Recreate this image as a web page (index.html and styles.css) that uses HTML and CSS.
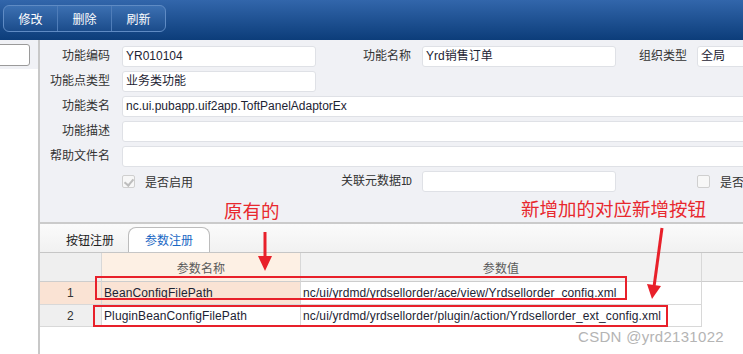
FILE: index.html
```html
<!DOCTYPE html>
<html lang="zh-CN">
<head>
    <meta charset="UTF-8">
    <meta name="viewport" content="width=device-width, initial-scale=1.0">
    <title>功能节点 - 参数注册</title>
    <link rel="stylesheet" href="styles.css">
</head>
<body>
    <div class="toolbar">
        <div class="btn-group">
            <button class="tool-btn">修改</button>
            <button class="tool-btn">删除</button>
            <button class="tool-btn">刷新</button>
        </div>
    </div>

    <div class="workspace">
        <aside class="side">
            <div class="side-top"><div class="side-search"></div></div>
        </aside>

        <main class="main">
            <!-- Card form -->
            <div class="card">
                <div class="lbl c1">功能编码</div>
                <div class="field">YR010104</div>
                <div class="lbl c3">功能名称</div>
                <div class="field">Yrd销售订单</div>
                <div class="lbl c5">组织类型</div>
                <div class="field edge">全局</div>

                <div class="lbl c1">功能点类型</div>
                <div class="field">业务类功能</div>

                <div class="lbl c1">功能类名</div>
                <div class="field wide edge">nc.ui.pubapp.uif2app.ToftPanelAdaptorEx</div>

                <div class="lbl c1">功能描述</div>
                <div class="field wide edge"></div>

                <div class="lbl c1">帮助文件名</div>
                <div class="field wide edge"></div>

                <div class="check c2"><span class="box checked"></span>是否启用</div>
                <div class="lbl c3">关联元数据<span class="mono">ID</span></div>
                <div class="field"></div>
                <div class="check c6"><span class="box"></span>是否启用</div>
            </div>

            <!-- Tabs -->
            <div class="tabs">
                <div class="tab">按钮注册</div>
                <div class="tab active">参数注册</div>
            </div>

            <!-- Parameter grid -->
            <div class="sheet">
                <div class="cell hd num"></div>
                <div class="cell hd name">参数名称</div>
                <div class="cell hd val">参数值</div>
                <div class="cell hd rest"></div>

                <div class="cell num sel">1</div>
                <div class="cell name sel">BeanConfigFilePath</div>
                <div class="cell val">nc/ui/yrdmd/yrdsellorder/ace/view/Yrdsellorder_config.xml</div>
                <div class="cell rest"></div>

                <div class="cell num">2</div>
                <div class="cell name">PluginBeanConfigFilePath</div>
                <div class="cell val">nc/ui/yrdmd/yrdsellorder/plugin/action/Yrdsellorder_ext_config.xml</div>
                <div class="cell rest"></div>
            </div>
        </main>
    </div>

    <!-- Annotations drawn over the screenshot -->
    <div class="notes">
        <div class="note note-old">原有的</div>
        <div class="note note-new">新增加的对应新增按钮</div>
        <div class="mark mark-1"></div>
        <div class="mark mark-2"></div>
        <svg class="arrows" width="743" height="354" viewBox="0 0 743 354">
            <line x1="265" y1="232" x2="265" y2="258" stroke="#e8202a" stroke-width="3"/>
            <polygon points="258,256 272,256 265,271" fill="#e8202a"/>
            <line x1="662" y1="228" x2="654" y2="287" stroke="#e8202a" stroke-width="3"/>
            <polygon points="647,284 661,286 652,299" fill="#e8202a"/>
        </svg>
        <div class="watermark">CSDN @yrd2131022</div>
    </div>
</body>
</html>
```

FILE: styles.css
```css
/* Global */
body {
    margin: 0;
    width: 743px;
    height: 354px;
    overflow: hidden;
    position: relative;
    font-family: "Liberation Sans", "Noto Sans CJK SC", sans-serif;
    font-size: 12px;
    color: #2b2b2b;
    background: #fff;
}

/* Toolbar */
.toolbar {
    height: 40px;
    box-sizing: border-box;
    padding: 5px 3px;
    background: linear-gradient(#3266ab, #0c3d7a);
}

.btn-group {
    display: inline-flex;
    height: 27px;
    border: 1px solid #5f8bc4;
    border-radius: 6px;
    background: linear-gradient(#3c70b2, #1b4c8b);
    box-sizing: border-box;
    overflow: hidden;
}

.tool-btn {
    width: 53px;
    padding: 0;
    border: none;
    background: transparent;
    color: #fff;
    font-family: "Noto Sans CJK SC", sans-serif;
    font-size: 12px;
    cursor: pointer;
}

.tool-btn + .tool-btn {
    border-left: 1px solid #4f7db9;
    width: 54px;
}

/* Workspace */
.workspace {
    display: flex;
    height: 314px;
}

.side {
    width: 38px;
    flex: none;
    border-right: 2px solid #c8c8c8;
    background: #fff;
}

.side-top {
    height: 29px;
    padding-top: 4px;
    box-sizing: border-box;
    background: #f0f1f5;
}

.side-search {
    width: 34px;
    height: 22px;
    margin-left: -4px;
    box-sizing: border-box;
    border: 1px solid #9a9a9a;
    border-radius: 3px;
    background: #fff;
}

.main {
    flex: 1;
    overflow: hidden;
    background: #f0f1f5;
    display: flex;
    flex-direction: column;
}

/* Card form */
.card {
    display: grid;
    grid-template-columns: 82px 194px 106px 194px 81px 1fr;
    grid-auto-rows: 21px;
    row-gap: 4px;
    padding-top: 6px;
    margin-bottom: 30px;
}

.c1 { grid-column: 1; }
.c2 { grid-column: 2; }
.c3 { grid-column: 3; }
.c5 { grid-column: 5; }
.c6 { grid-column: 6; }

.lbl {
    text-align: right;
    line-height: 21px;
    padding-right: 12px;
    white-space: nowrap;
    color: #333;
}

.lbl.c3 { padding-right: 11px; }
.lbl.c5 { padding-right: 10px; }

.mono {
    font-family: "DejaVu Sans Mono", monospace;
    font-size: 10px;
    letter-spacing: -1px;
}

.field {
    box-sizing: border-box;
    height: 21px;
    line-height: 19px;
    padding: 0 3px;
    border: 1px solid #dfe1e6;
    border-radius: 3px;
    background: #fff;
    color: #1d2333;
    white-space: nowrap;
    overflow: hidden;
}

.field.wide { grid-column: 2 / -1; }
.field.edge { margin-right: -6px; }

.check {
    display: flex;
    align-items: center;
    gap: 10px;
    color: #333;
    white-space: nowrap;
}

.box {
    flex: none;
    width: 13px;
    height: 13px;
    box-sizing: border-box;
    border: 1px solid #cfcfcf;
    border-radius: 2px;
    background: #f7f7f7;
    position: relative;
}

.box.checked::after {
    content: "";
    position: absolute;
    left: 3px;
    top: 1px;
    width: 4px;
    height: 7px;
    border: solid #bdbdbd;
    border-width: 0 2px 2px 0;
    transform: rotate(40deg);
}

/* Tabs */
.tabs {
    height: 31px;
    box-sizing: border-box;
    border-top: 2px solid #cbcbcb;
    border-bottom: 1px solid #c6c6c6;
    background: linear-gradient(#fbfbfb, #f1f1f1);
    display: flex;
    align-items: flex-end;
    gap: 14px;
    padding-left: 26px;
}

.tab {
    height: 24px;
    line-height: 24px;
    font-family: "Noto Sans CJK SC", sans-serif;
    color: #222;
}

.tab.active {
    padding: 0 16px;
    border: 1px solid #bcbcbc;
    border-bottom: none;
    border-radius: 8px 8px 0 0;
    background: #fff;
    color: #1a68c4;
}

/* Parameter grid */
.sheet {
    flex: 1;
    background: #fff;
    display: grid;
    grid-template-columns: 62px 199px 401px 1fr;
    grid-template-rows: 29px 23px 22px;
    align-content: start;
}

.cell {
    box-sizing: border-box;
    border-right: 1px solid #d8d8d8;
    border-bottom: 1px solid #d8d8d8;
    padding: 0 2px;
    display: flex;
    align-items: center;
    white-space: nowrap;
    overflow: hidden;
    color: #1d2333;
    letter-spacing: 0.12px;
}

.cell.num {
    justify-content: center;
    background: #efefef;
    color: #333;
}

.cell.hd {
    justify-content: center;
    color: #5a5a5a;
    background: #f2f2f2;
    border-bottom-color: #cdcdcd;
}

.cell.hd.num { background: #efefef; }
.cell.hd.name { background: #fdf0e4; }

.cell.rest {
    border: none;
}

.cell.hd.rest {
    border-bottom: 1px solid #cdcdcd;
}

.cell.sel { background: #fae3d4; }

/* Annotations */
.notes {
    position: absolute;
    inset: 0;
    pointer-events: none;
}

.note {
    position: absolute;
    font-family: "Noto Sans CJK SC", sans-serif;
    font-size: 18.5px;
    line-height: 22px;
    color: #e8282e;
    white-space: nowrap;
}

.note-old { left: 224px; top: 199px; }
.note-new { left: 521px; top: 197px; }

.mark {
    position: absolute;
    box-sizing: border-box;
    border: 2px solid #e8202a;
}

.mark-1 { left: 95px; top: 276px; width: 532px; height: 24px; }
.mark-2 { left: 93px; top: 305px; width: 575px; height: 22px; }

.arrows {
    position: absolute;
    left: 0;
    top: 0;
}

.watermark {
    position: absolute;
    left: 578px;
    top: 328px;
    font-size: 15px;
    color: #b4b4b4;
    letter-spacing: 0.3px;
}
```
